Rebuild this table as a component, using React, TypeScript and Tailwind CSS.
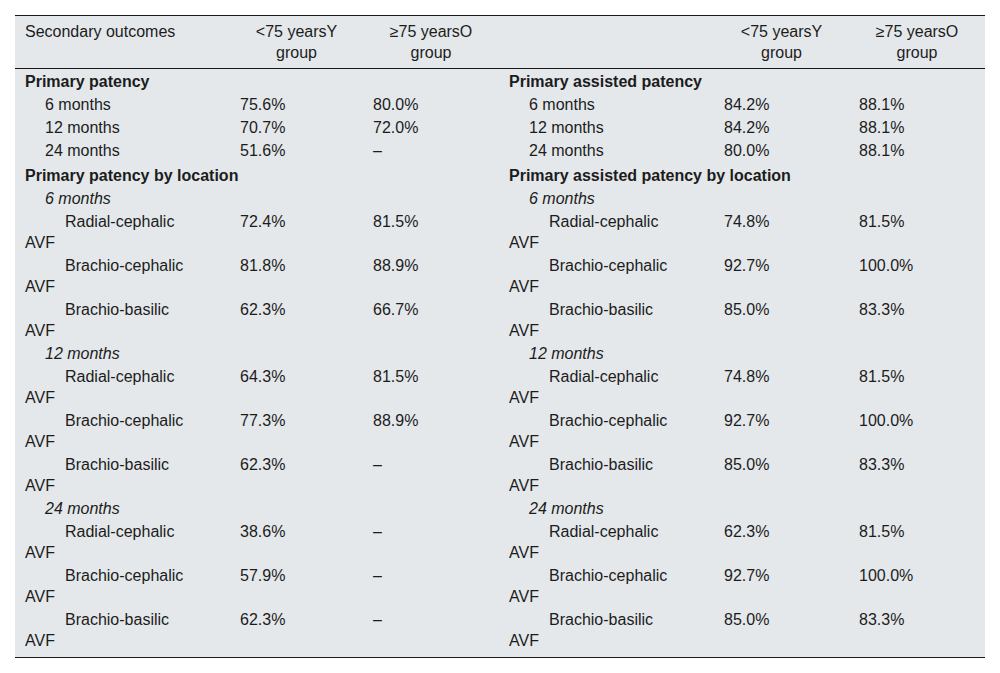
import React from "react";

type Cell = { label: string; kind: "section" | "sub" | "italic" | "loc"; a?: string; b?: string; extraTop?: boolean };

const rows: [Cell, Cell][] = [];

const sec = (l: string, r: string, extraTop = false) =>
  rows.push([
    { label: l, kind: "section", extraTop },
    { label: r, kind: "section", extraTop },
  ]);
const sub = (label: string, a: string, b: string, c: string, d: string) =>
  rows.push([
    { label, kind: "sub", a, b },
    { label, kind: "sub", a: c, b: d },
  ]);
const ital = (label: string) =>
  rows.push([
    { label, kind: "italic" },
    { label, kind: "italic" },
  ]);
const loc = (label: string, a: string, b: string, c: string, d: string) =>
  rows.push([
    { label, kind: "loc", a, b },
    { label, kind: "loc", a: c, b: d },
  ]);

sec("Primary patency", "Primary assisted patency");
sub("6 months", "75.6%", "80.0%", "84.2%", "88.1%");
sub("12 months", "70.7%", "72.0%", "84.2%", "88.1%");
sub("24 months", "51.6%", "–", "80.0%", "88.1%");
sec("Primary patency by location", "Primary assisted patency by location", true);
ital("6 months");
loc("Radial-cephalic", "72.4%", "81.5%", "74.8%", "81.5%");
loc("Brachio-cephalic", "81.8%", "88.9%", "92.7%", "100.0%");
loc("Brachio-basilic", "62.3%", "66.7%", "85.0%", "83.3%");
ital("12 months");
loc("Radial-cephalic", "64.3%", "81.5%", "74.8%", "81.5%");
loc("Brachio-cephalic", "77.3%", "88.9%", "92.7%", "100.0%");
loc("Brachio-basilic", "62.3%", "–", "85.0%", "83.3%");
ital("24 months");
loc("Radial-cephalic", "38.6%", "–", "62.3%", "81.5%");
loc("Brachio-cephalic", "57.9%", "–", "92.7%", "100.0%");
loc("Brachio-basilic", "62.3%", "–", "85.0%", "83.3%");

function Label({ c }: { c: Cell }) {
  if (c.kind === "section") return <div className="whitespace-nowrap font-bold">{c.label}</div>;
  if (c.kind === "sub") return <div className="whitespace-nowrap pl-5">{c.label}</div>;
  if (c.kind === "italic") return <div className="whitespace-nowrap pl-5 italic">{c.label}</div>;
  return (
    <div className="whitespace-nowrap indent-10">
      {c.label}
      <br />
      AVF
    </div>
  );
}

export default function App() {
  return (
    <div className="min-h-[673px] w-[1000px] bg-white pt-[15px] pl-[15px]" style={{ fontFamily: '"Liberation Sans", Arial, sans-serif' }}>
      <table className="w-[970px] table-fixed border-collapse bg-[#e4e8eb] text-[16px] leading-[21px] text-[#1c1c1c]">
        <colgroup>
          <col className="w-[215px]" />
          <col className="w-[133px]" />
          <col className="w-[136px]" />
          <col className="w-[215px]" />
          <col className="w-[135px]" />
          <col className="w-[136px]" />
        </colgroup>
        <thead>
          <tr className="border-t border-b border-[#1a1a1a] align-top">
            <th className="px-[10px] pt-[5px] pb-[5px] text-left font-normal">Secondary outcomes</th>
            <th className="px-[10px] pt-[5px] pb-[5px] text-center font-normal">
              &lt;75 yearsY
              <br />
              group
            </th>
            <th className="px-[10px] pt-[5px] pb-[5px] text-center font-normal">
              ≥75 yearsO
              <br />
              group
            </th>
            <th className="px-[10px] pt-[5px] pb-[5px] text-left font-normal"></th>
            <th className="px-[10px] pt-[5px] pb-[5px] text-center font-normal">
              &lt;75 yearsY
              <br />
              group
            </th>
            <th className="px-[10px] pt-[5px] pb-[5px] text-center font-normal">
              ≥75 yearsO
              <br />
              group
            </th>
          </tr>
        </thead>
        <tbody className="border-b border-[#1a1a1a]">
          {rows.map((r, i) => {
            const last = i === rows.length - 1;
            const pt = r[0].extraTop ? "pt-[3px]" : i === 0 ? "pt-[2px]" : "pt-[1px]";
            const pb = last ? "pb-[6px]" : "pb-[1px]";
            const td = `px-[10px] ${pt} ${pb}`;
            return (
              <tr key={i} className="align-top">
                {r.map((c, j) => (
                  <React.Fragment key={j}>
                    <td className={td}>
                      <Label c={c} />
                    </td>
                    <td className={td}>{c.a}</td>
                    <td className={td}>{c.b}</td>
                  </React.Fragment>
                ))}
              </tr>
            );
          })}
        </tbody>
      </table>
    </div>
  );
}
